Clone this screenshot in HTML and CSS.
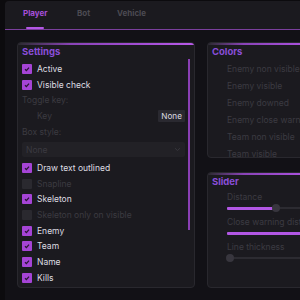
FILE: index.html
```html
<!DOCTYPE html>
<html lang="en">
<head>
    <meta charset="UTF-8">
    <title>Menu</title>
    <link rel="stylesheet" href="styles.css">
</head>
<body>
    <div class="window">
        <div class="header">
            <div class="tab active">Player</div>
            <div class="tab">Bot</div>
            <div class="tab">Vehicle</div>
        </div>
        <div class="content">
            <div class="panel settings">
                <div class="title">Settings</div>
                <div class="scroll">
                    <div class="row"><span class="box on"><svg viewBox="0 0 10 10"><path d="M3 5.3 4.4 6.6 7 3.6"/></svg></span>Active</div>
                    <div class="row"><span class="box on"><svg viewBox="0 0 10 10"><path d="M3 5.3 4.4 6.6 7 3.6"/></svg></span>Visible check</div>
                    <div class="row dim">Toggle key:</div>
                    <div class="row key"><span class="dim">Key</span><span class="keybtn">None</span></div>
                    <div class="row dim small">Box style:</div>
                    <div class="select"><span>None</span><svg viewBox="0 0 10 6"><path d="M1.5 1.2 5 4.5 8.5 1.2"/></svg></div>
                    <div class="row"><span class="box on"><svg viewBox="0 0 10 10"><path d="M3 5.3 4.4 6.6 7 3.6"/></svg></span>Draw text outlined</div>
                    <div class="row dim"><span class="box"></span>Snapline</div>
                    <div class="row"><span class="box on"><svg viewBox="0 0 10 10"><path d="M3 5.3 4.4 6.6 7 3.6"/></svg></span>Skeleton</div>
                    <div class="row dim"><span class="box"></span>Skeleton only on visible</div>
                    <div class="row"><span class="box on"><svg viewBox="0 0 10 10"><path d="M3 5.3 4.4 6.6 7 3.6"/></svg></span>Enemy</div>
                    <div class="row"><span class="box on"><svg viewBox="0 0 10 10"><path d="M3 5.3 4.4 6.6 7 3.6"/></svg></span>Team</div>
                    <div class="row"><span class="box on"><svg viewBox="0 0 10 10"><path d="M3 5.3 4.4 6.6 7 3.6"/></svg></span>Name</div>
                    <div class="row"><span class="box on"><svg viewBox="0 0 10 10"><path d="M3 5.3 4.4 6.6 7 3.6"/></svg></span>Kills</div>
                    <div class="row"><span class="box on"></span></div>
                </div>
                <div class="vbar"></div>
            </div>
            <div class="side">
                <div class="panel colors">
                    <div class="title">Colors</div>
                    <div class="item">Enemy non visible</div>
                    <div class="item">Enemy visible</div>
                    <div class="item">Enemy downed</div>
                    <div class="item">Enemy close warning</div>
                    <div class="item">Team non visible</div>
                    <div class="item">Team visible</div>
                </div>
                <div class="panel slider">
                    <div class="title">Slider</div>
                    <div class="slabel">Distance</div>
                    <div class="track"><div class="fill" style="width: 46px"></div><div class="knob"></div></div>
                    <div class="slabel">Close warning distance</div>
                    <div class="track"><div class="fill" style="width: 120px"></div></div>
                    <div class="slabel">Line thickness</div>
                    <div class="track"><div class="fill" style="width: 0"></div><div class="knob"></div></div>
                </div>
            </div>
        </div>
    </div>
</body>
</html>
```

FILE: styles.css
```css
* {
    margin: 0;
    padding: 0;
    box-sizing: border-box;
}
body {
    background: #0c0b0e;
    font-family: Inter, "Liberation Sans", sans-serif;
    overflow: hidden;
}
.window {
    margin: 1px 0 0 5px;
    width: 330px;
    height: 310px;
    background: #121116;
    border-radius: 4px 0 0 0;
}
.header {
    height: 29px;
    display: flex;
    align-items: center;
    padding-left: 18px;
    background: #1b1a1f;
    border-bottom: 1px solid #7a3f9c;
    border-radius: 4px 0 0 0;
}
.tab {
    font-size: 8px;
    font-weight: 700;
    color: #4c4a52;
    width: 54px;
    position: relative;
    height: 100%;
    line-height: 24px;
}
.tab:nth-child(2) {
    width: 40px;
}
.tab.active {
    color: #a64fd9;
}
.tab.active::after {
    content: "";
    position: absolute;
    left: 3px;
    bottom: 0;
    width: 18px;
    height: 2px;
    border-radius: 1px;
    background: #b457e6;
}
.content {
    display: flex;
    gap: 12px;
    padding: 12px 0 0 12px;
}
.panel {
    background: #1b1a1f;
    border: 1px solid #29282e;
    border-radius: 4px;
    position: relative;
    overflow: hidden;
}
.panel::before {
    content: "";
    position: absolute;
    left: 0;
    right: 0;
    top: 0;
    height: 2px;
    background: linear-gradient(90deg, #2b2a30, #8a44b8 30%, #a44ed6 70%, #b85ae8);
}
.title {
    height: 16px;
    margin-top: 1px;
    line-height: 16px;
    padding-left: 4px;
    font-size: 9.5px;
    font-weight: 700;
    color: #8a4ed8;
}
.settings {
    width: 178px;
    height: 246px;
}
.scroll {
    display: flex;
    flex-direction: column;
    padding: 1px 9px 0 4px;
}
.row {
    height: 15.7px;
    flex-shrink: 0;
    display: flex;
    align-items: center;
    gap: 5px;
    font-size: 8.5px;
    color: #dedde2;
}
.row.dim, .dim {
    color: #3b3a41;
}
.key {
    justify-content: space-between;
    padding-left: 15px;
    height: 16px;
}
.row.small {
    height: 15px;
}
.box {
    width: 10px;
    height: 10px;
    border-radius: 1px;
    background: #2a292f;
    display: flex;
}
.box.on {
    background: #a544d6;
}
.box svg {
    width: 10px;
    height: 10px;
    fill: none;
    stroke: #2a1633;
    stroke-width: 1.3;
}
.keybtn {
    background: #2a2930;
    color: #dcdbe0;
    padding: 1px 3px;
    border-radius: 1px;
    font-size: 8.2px;
}
.select {
    height: 15px;
    flex-shrink: 0;
    margin: 3px 0;
    background: #222126;
    border-radius: 2px;
    display: flex;
    align-items: center;
    justify-content: space-between;
    padding: 0 4px;
    font-size: 8.5px;
    color: #3b3a41;
}
.select svg {
    width: 7px;
    height: 5px;
    fill: none;
    stroke: #3b3a41;
    stroke-width: 1.2;
}
.vbar {
    position: absolute;
    left: 170px;
    top: 16px;
    width: 2px;
    height: 171px;
    background: #8a3fb4;
}
.side {
    display: flex;
    flex-direction: column;
    gap: 14px;
}
.colors, .slider {
    width: 120px;
    height: 116px;
}
.item {
    height: 17px;
    line-height: 17px;
    padding-left: 19px;
    font-size: 8.5px;
    color: #3c3b42;
    white-space: nowrap;
}
.colors .title {
    margin-bottom: 1px;
}
.slider .title {
    margin-bottom: 2px;
}
.slabel {
    height: 11px;
    line-height: 11px;
    padding-left: 19px;
    font-size: 8.5px;
    color: #3c3b42;
    white-space: nowrap;
}
.track {
    height: 10px;
    margin: 0 0 4px 19px;
    display: flex;
    align-items: center;
    position: relative;
}
.track::before {
    content: "";
    position: absolute;
    left: 0;
    right: 0;
    top: 4px;
    height: 2px;
    background: #2c2b31;
}
.fill {
    height: 3px;
    background: #b257e4;
    border-radius: 1px;
    position: relative;
}
.knob {
    width: 8px;
    height: 8px;
    border-radius: 50%;
    background: #38363e;
    margin-left: -1px;
    position: relative;
}
```
